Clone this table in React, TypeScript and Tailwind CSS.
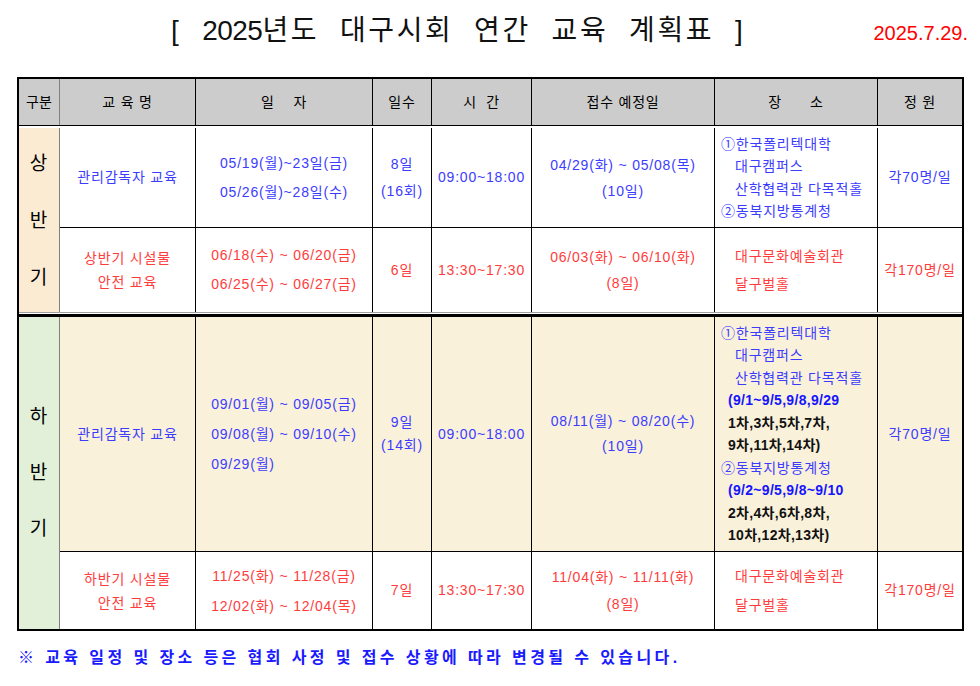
import React from "react";

const cell =
  "border-r border-b border-black flex items-center justify-center text-center";
const cellNoB = "border-r border-black flex items-center justify-center text-center";
const lastCell = "border-b border-black flex items-center justify-center text-center";
const lastCellNoB = "flex items-center justify-center text-center";

const cols =
  "grid grid-cols-[41px_136px_177px_59px_100px_183px_163px_84px]";

const blue = "text-[#3c3cff]";
const red = "text-[#ff3c3c]";

export default function App() {
  return (
    <div className="w-[980px] h-[686px] bg-white font-['Liberation_Sans','Noto_Sans_CJK_KR',sans-serif] text-[14px] tracking-[0.8px] text-black overflow-hidden">
      {/* Title */}
      <div className="flex items-baseline pt-[16px] h-[77px]">
        <div className="pl-[171px] text-[28px] leading-[30px] tracking-[2.6px] whitespace-pre text-[#111]">
          [  <span className="tracking-[-0.5px]">2025</span>년도  대구시회  연간  교육  계획표  ]
        </div>
        <div className="ml-auto pr-[12px] text-[20px] leading-[30px] tracking-[0px] text-[#ff0000]">
          2025.7.29.
        </div>
      </div>

      {/* Table */}
      <div className="ml-[17px] w-[947px] border-2 border-black">
        {/* header */}
        <div className={`${cols} h-[46px] bg-[#cccccc]`}>
          <div className="border-r border-[#808080] flex items-center justify-center tracking-[0px]">구분</div>
          <div className={cellNoB + " whitespace-pre"}>교 육 명</div>
          <div className={cellNoB + " whitespace-pre"}>일    자</div>
          <div className={cellNoB}>일수</div>
          <div className={cellNoB + " whitespace-pre"}>시  간</div>
          <div className={cellNoB + " whitespace-pre"}>접수 예정일</div>
          <div className={cellNoB + " whitespace-pre"}>장      소</div>
          <div className={lastCellNoB + " whitespace-pre"}>정 원</div>
        </div>
        <div className="h-px bg-black" />
        <div className="h-[2px] bg-white" />

        {/* 상반기 */}
        <div className={`${cols} grid-rows-[100px_84px]`}>
          <div className="row-span-2 bg-[#fcebd3] border-r border-[#808080] flex flex-col items-center justify-center text-[19px] leading-[57px]">
            <span>상</span>
            <span>반</span>
            <span>기</span>
          </div>
          {/* row 1 */}
          <div className={`${cell} ${blue}`}>관리감독자 교육</div>
          <div className={`${cell} ${blue} flex-col leading-[29px]`}>
            <span>05/19(월)~23일(금)</span>
            <span>05/26(월)~28일(수)</span>
          </div>
          <div className={`${cell} ${blue} flex-col leading-[27px]`}>
            <span>8일</span>
            <span>(16회)</span>
          </div>
          <div className={`${cell} ${blue}`}>09:00~18:00</div>
          <div className={`${cell} ${blue} flex-col leading-[26px] whitespace-pre`}>
            <span>04/29(화) ~ 05/08(목)</span>
            <span>(10일)</span>
          </div>
          <div className={`border-r border-b border-black flex flex-col justify-center pl-[6px] ${blue} leading-[22.5px] whitespace-pre`}>
            <span>①한국폴리텍대학</span>
            <span className="pl-[14px]">대구캠퍼스</span>
            <span className="pl-[14px]">산학협력관 다목적홀</span>
            <span>②동북지방통계청</span>
          </div>
          <div className={`${lastCell} ${blue}`}>각70명/일</div>

          {/* row 2 */}
          <div className={`${cellNoB} ${red} flex-col leading-[24px]`}>
            <span>상반기 시설물</span>
            <span>안전 교육</span>
          </div>
          <div className={`${cellNoB} ${red} flex-col leading-[29px] whitespace-pre`}>
            <span>06/18(수) ~ 06/20(금)</span>
            <span>06/25(수) ~ 06/27(금)</span>
          </div>
          <div className={`${cellNoB} ${red}`}>6일</div>
          <div className={`${cellNoB} ${red}`}>13:30~17:30</div>
          <div className={`${cellNoB} ${red} flex-col leading-[26px] whitespace-pre`}>
            <span>06/03(화) ~ 06/10(화)</span>
            <span>(8일)</span>
          </div>
          <div className={`border-r border-black flex flex-col justify-center pl-[20px] ${red} leading-[28px] whitespace-pre`}>
            <span>대구문화예술회관</span>
            <span>달구벌홀</span>
          </div>
          <div className={`${lastCellNoB} ${red}`}>각170명/일</div>
        </div>

        <div className="h-px bg-[#a0a0a0]" />
        <div className="h-px bg-white" />
        <div className="h-[3px] bg-black" />

        {/* 하반기 */}
        <div className={`${cols} grid-rows-[235px_77px]`}>
          <div className="row-span-2 bg-[#e2efd9] border-r border-[#808080] flex flex-col items-center justify-center text-[19px] leading-[56px]">
            <span>하</span>
            <span>반</span>
            <span>기</span>
          </div>
          {/* row 3 */}
          <div className={`${cell} bg-[#faf1db] ${blue}`}>관리감독자 교육</div>
          <div className={`${cell} bg-[#faf1db] ${blue}`}>
            <div className="flex flex-col text-left leading-[30px] whitespace-pre">
              <span>09/01(월) ~ 09/05(금)</span>
              <span>09/08(월) ~ 09/10(수)</span>
              <span>09/29(월)</span>
            </div>
          </div>
          <div className={`${cell} bg-[#faf1db] ${blue} flex-col leading-[23px]`}>
            <span>9일</span>
            <span>(14회)</span>
          </div>
          <div className={`${cell} bg-[#faf1db] ${blue}`}>09:00~18:00</div>
          <div className={`${cell} bg-[#faf1db] ${blue} flex-col leading-[25px] whitespace-pre`}>
            <span>08/11(월) ~ 08/20(수)</span>
            <span>(10일)</span>
          </div>
          <div className="border-r border-b border-black bg-[#faf1db] flex flex-col justify-center pl-[6px] leading-[22.5px] whitespace-pre">
            <span className={blue}>①한국폴리텍대학</span>
            <span className={`${blue} pl-[14px]`}>대구캠퍼스</span>
            <span className={`${blue} pl-[14px]`}>산학협력관 다목적홀</span>
            <span className="text-[#1515ff] font-bold pl-[7px] tracking-[0.3px]">(9/1~9/5,9/8,9/29</span>
            <span className="text-[#111] font-bold pl-[7px] tracking-[0.3px]">1차,3차,5차,7차,</span>
            <span className="text-[#111] font-bold pl-[7px] tracking-[0.3px]">9차,11차,14차)</span>
            <span className={blue}>②동북지방통계청</span>
            <span className="text-[#1515ff] font-bold pl-[7px] tracking-[0.3px]">(9/2~9/5,9/8~9/10</span>
            <span className="text-[#111] font-bold pl-[7px] tracking-[0.3px]">2차,4차,6차,8차,</span>
            <span className="text-[#111] font-bold pl-[7px] tracking-[0.3px]">10차,12차,13차)</span>
          </div>
          <div className={`${lastCell} bg-[#faf1db] ${blue}`}>각70명/일</div>

          {/* row 4 */}
          <div className={`${cellNoB} ${red} flex-col leading-[24px]`}>
            <span>하반기 시설물</span>
            <span>안전 교육</span>
          </div>
          <div className={`${cellNoB} ${red} flex-col leading-[30px] whitespace-pre`}>
            <span>11/25(화) ~ 11/28(금)</span>
            <span>12/02(화) ~ 12/04(목)</span>
          </div>
          <div className={`${cellNoB} ${red}`}>7일</div>
          <div className={`${cellNoB} ${red}`}>13:30~17:30</div>
          <div className={`${cellNoB} ${red} flex-col leading-[27px] whitespace-pre`}>
            <span>11/04(화) ~ 11/11(화)</span>
            <span>(8일)</span>
          </div>
          <div className={`border-r border-black flex flex-col justify-center pl-[20px] ${red} leading-[29px] whitespace-pre`}>
            <span>대구문화예술회관</span>
            <span>달구벌홀</span>
          </div>
          <div className={`${lastCellNoB} ${red}`}>각170명/일</div>
        </div>
      </div>

      {/* Footer note */}
      <div className="pl-[18px] pt-[17px] text-[16px] font-bold tracking-[3.4px] text-[#1a1aff] leading-[20px] whitespace-pre">
        ※ 교육 일정 및 장소 등은 협회 사정 및 접수 상황에 따라 변경될 수 있습니다.
      </div>
    </div>
  );
}
